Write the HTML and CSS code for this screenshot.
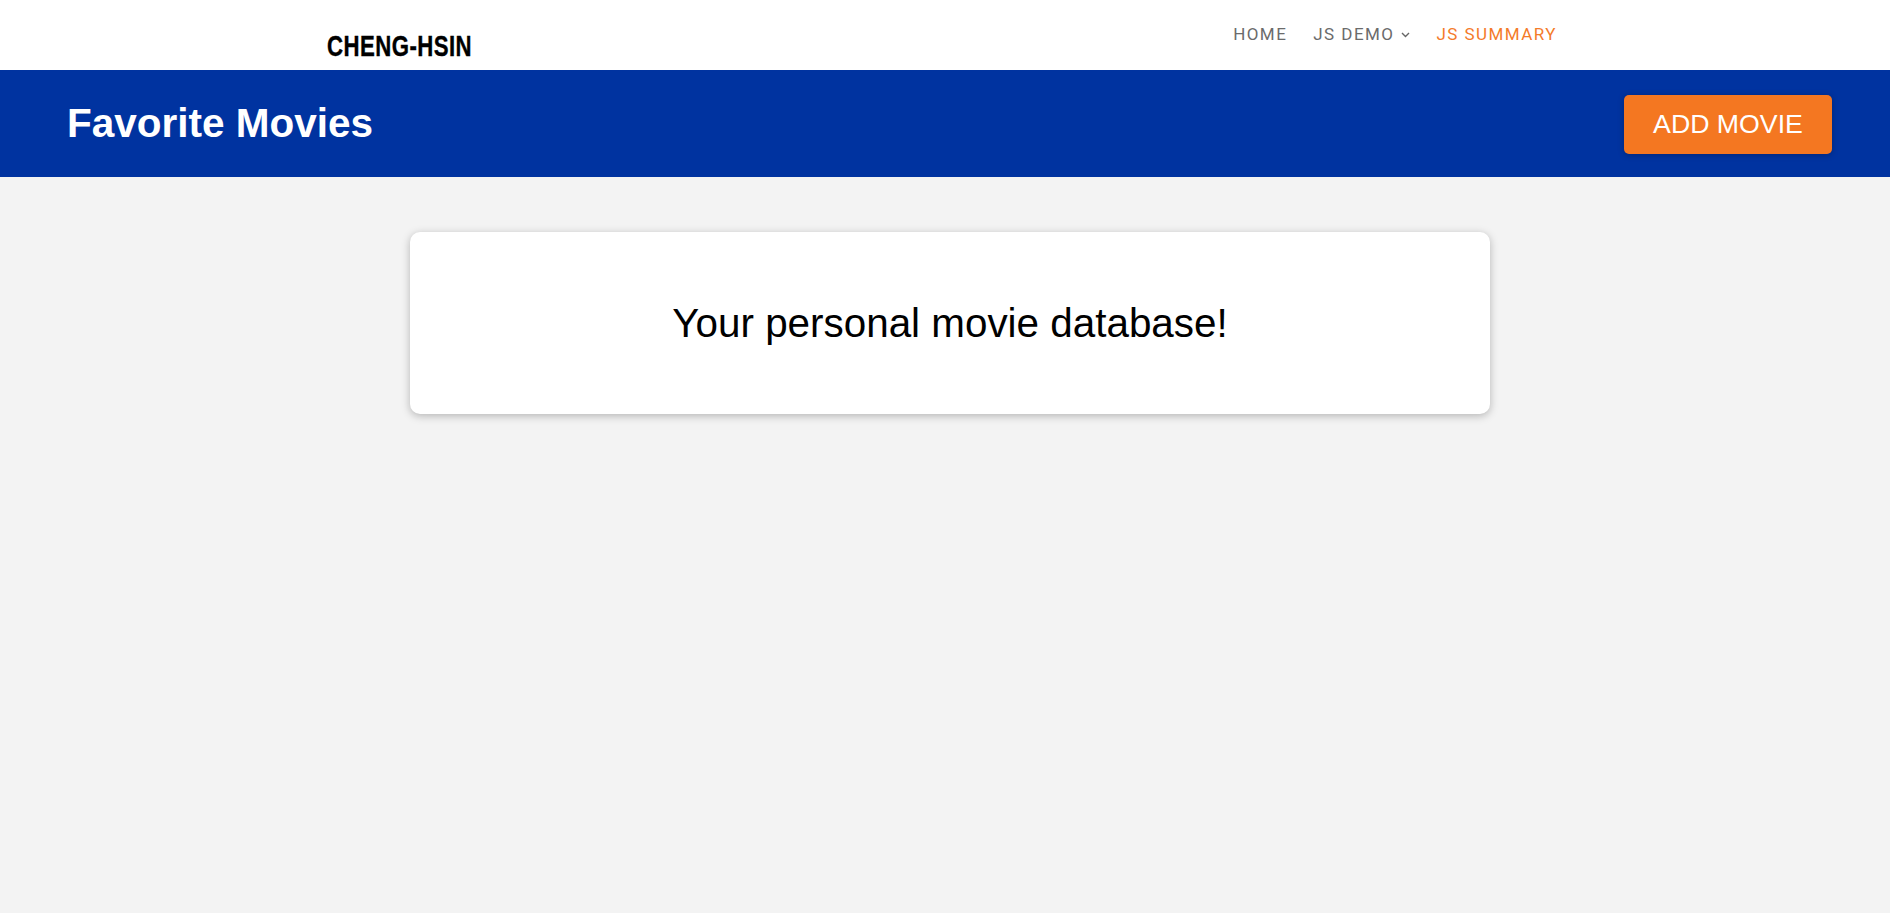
FILE: index.html
```html
<!DOCTYPE html>
<html lang="en">
<head>
<meta charset="utf-8">
<title>Favorite Movies</title>
<link rel="stylesheet" href="styles.css">
</head>
<body>
<div class="topbar">
  <div class="topbar-inner">
    <div class="logo"><span class="logo-text">CHENG-HSIN</span></div>
    <nav class="nav">
      <a class="nav-link">HOME</a>
      <a class="nav-link">JS DEMO <svg class="chev" width="9" height="6" viewBox="0 0 9 6"><polyline points="1,1 4.5,4.5 8,1" fill="none" stroke="#666" stroke-width="1.4"/></svg></a>
      <a class="nav-link active">JS SUMMARY</a>
    </nav>
  </div>
</div>
<header class="main-header">
  <h1 class="title">Favorite Movies</h1>
  <button class="add-btn">ADD MOVIE</button>
</header>
<main class="content">
  <section class="card">
    <h2 class="card-text">Your personal movie database!</h2>
  </section>
</main>
</body>
</html>
```

FILE: styles.css
```css
html, body {
  margin: 0;
  padding: 0;
}
body {
  background: #f3f3f3;
  font-family: "Liberation Sans", Arial, sans-serif;
  min-height: 913px;
}
.topbar {
  background: #fff;
  height: 70px;
}
.topbar-inner {
  width: 1236px;
  margin: 0 auto;
  display: flex;
  justify-content: space-between;
  align-items: flex-start;
  height: 70px;
}
.logo {
  width: 150px;
  padding-top: 31px;
}
.logo-text {
  display: inline-block;
  font-family: "Liberation Sans", Arial, sans-serif;
  font-weight: 700;
  font-size: 30px;
  line-height: 30px;
  letter-spacing: 0.6px;
  color: #000;
  transform: scaleX(0.74);
  transform-origin: left center;
  white-space: nowrap;
  -webkit-text-stroke: 0.4px #000;
}
.nav {
  display: flex;
  gap: 26px;
  padding-top: 24px;
  padding-right: 6px;
}
.nav-link {
  font-family: Roboto, sans-serif;
  font-size: 17px;
  font-weight: 400;
  letter-spacing: 1.45px;
  color: #6b6b6b;
  line-height: 20px;
  display: flex;
  align-items: center;
}
.nav-link.active {
  color: #f47b2a;
}
.chev {
  margin-left: 7px;
  margin-top: 1px;
}
.main-header {
  background: #0033a0;
  height: 107px;
  display: flex;
  align-items: center;
  justify-content: space-between;
  padding: 0 58px 0 67px;
}
.title {
  margin: 0;
  color: #fff;
  font-size: 40.5px;
  font-weight: 700;
}
.add-btn {
  font-family: "Liberation Sans", Arial, sans-serif;
  font-size: 26.7px;
  color: #fff;
  background: #f47721;
  border: none;
  border-radius: 5px;
  width: 208px;
  height: 59px;
  padding: 0;
  box-shadow: 0 1px 6px rgba(0, 0, 0, 0.26);
  margin-top: 1px;
}
.content {
  display: flex;
  justify-content: center;
  padding-top: 55px;
  padding-left: 10px;
}
.card {
  width: 1080px;
  height: 182px;
  background: #fff;
  border-radius: 10px;
  box-shadow: 0 2px 8px rgba(0, 0, 0, 0.26);
  display: flex;
  align-items: center;
  justify-content: center;
}
.card-text {
  margin: 0;
  font-size: 40.4px;
  font-weight: 400;
  color: #000;
}
```
